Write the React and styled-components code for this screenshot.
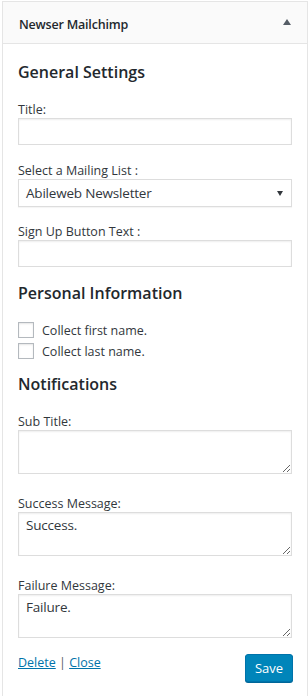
import React from 'react'
import styled, { createGlobalStyle } from 'styled-components'

const GlobalStyle = createGlobalStyle`
  body {
    margin: 0;
    background: #fff;
    font-family: "Open Sans", "Noto Sans", sans-serif;
    color: #23282d;
  }
`

const Widget = styled.div`
  margin: 1px 0 0 2px;
  width: 306px;
  box-sizing: border-box;
  border: 1px solid #e5e5e5;
  border-bottom: none;
  background: #fff;
`

const Header = styled.div`
  display: flex;
  align-items: center;
  justify-content: space-between;
  box-sizing: border-box;
  height: 42px;
  padding: 3px 16px 0 16px;
  background: #fafafa;
  border-bottom: 1px solid #e5e5e5;
  font-size: 12.5px;
  font-weight: 600;
  letter-spacing: -0.2px;
  color: #23282d;
`

const Arrow = styled.span`
  width: 0;
  height: 0;
  border-left: 4px solid transparent;
  border-right: 4px solid transparent;
  border-bottom: 6px solid #555d66;
  margin-top: -4px;
`

const Content = styled.div`
  padding: 17px 14px 14px 15px;
`

const Heading = styled.h3`
  margin: 0 0 ${p => p.gap}px;
  font-size: 16px;
  font-weight: 600;
  line-height: 22px;
  color: #23282d;
`

const Field = styled.div`
  margin-bottom: ${p => p.mb}px;
`

const Label = styled.label`
  display: block;
  font-size: 12.5px;
  line-height: 17px;
  color: #32373c;
`

const TextInput = styled.input`
  display: block;
  box-sizing: border-box;
  width: 274px;
  height: 27px;
  margin: 0;
  border: 1px solid #ddd;
  box-shadow: inset 0 1px 2px rgba(0, 0, 0, 0.07);
  background: #fff;
  font-family: inherit;
  font-size: 13px;
`

const SelectBox = styled.div`
  display: flex;
  align-items: center;
  justify-content: space-between;
  box-sizing: border-box;
  width: 274px;
  height: 28px;
  padding: 0 8px 0 7px;
  border: 1px solid #ddd;
  box-shadow: 0 1px 1px rgba(0, 0, 0, 0.04);
  font-size: 13.5px;
  color: #32373c;
  letter-spacing: -0.2px;
`

const Caret = styled.span`
  width: 0;
  height: 0;
  border-left: 3px solid transparent;
  border-right: 3px solid transparent;
  border-top: 5px solid #32373c;
`

const TextArea = styled.textarea`
  display: block;
  box-sizing: border-box;
  width: 274px;
  height: 44px;
  margin: 0;
  padding: 3px 7px;
  border: 1px solid #ddd;
  box-shadow: inset 0 1px 2px rgba(0, 0, 0, 0.07);
  resize: vertical;
  font-family: inherit;
  font-size: 13.5px;
  line-height: 18px;
  color: #32373c;
  letter-spacing: -0.2px;
`

const CheckRow = styled.label`
  display: flex;
  align-items: center;
  gap: 8px;
  height: 16px;
  margin-bottom: ${p => p.mb}px;
  font-size: 12.5px;
  color: #32373c;
`

const Box = styled.span`
  box-sizing: border-box;
  width: 16px;
  height: 16px;
  border: 1px solid #b4b9be;
  background: #fff;
  box-shadow: inset 0 1px 2px rgba(0, 0, 0, 0.1);
`

const Footer = styled.div`
  display: flex;
  justify-content: space-between;
  align-items: flex-start;
  margin-top: 16px;
`

const Links = styled.div`
  font-size: 12.5px;
  line-height: 18px;
  color: #555d66;
  a {
    color: #0073aa;
    text-decoration: underline;
  }
`

const SaveButton = styled.button`
  box-sizing: border-box;
  width: 48px;
  height: 28px;
  padding: 0 0 1px;
  border: 1px solid #0073aa;
  border-radius: 3px;
  background: #0085ba;
  box-shadow: 0 1px 0 #006799;
  color: #fff;
  font-family: inherit;
  font-size: 13px;
  cursor: pointer;
`

export default function App () {
  return (
    <>
      <GlobalStyle />
      <Widget>
        <Header>
          <span>Newser Mailchimp</span>
          <Arrow />
        </Header>
        <Content>
          <Heading gap={18}>General Settings</Heading>
          <Field mb={17}>
            <Label>Title:</Label>
            <TextInput />
          </Field>
          <Field mb={16}>
            <Label>Select a Mailing List :</Label>
            <SelectBox>
              <span>Abileweb Newsletter</span>
              <Caret />
            </SelectBox>
          </Field>
          <Field mb={15}>
            <Label>Sign Up Button Text :</Label>
            <TextInput />
          </Field>
          <Heading gap={18}>Personal Information</Heading>
          <CheckRow mb={5}>
            <Box />
            Collect first name.
          </CheckRow>
          <CheckRow mb={14}>
            <Box />
            Collect last name.
          </CheckRow>
          <Heading gap={18}>Notifications</Heading>
          <Field mb={21}>
            <Label>Sub Title:</Label>
            <TextArea />
          </Field>
          <Field mb={21}>
            <Label>Success Message:</Label>
            <TextArea defaultValue='Success.' />
          </Field>
          <Field mb={0}>
            <Label>Failure Message:</Label>
            <TextArea defaultValue='Failure.' />
          </Field>
          <Footer>
            <Links>
              <a href='#'>Delete</a> | <a href='#'>Close</a>
            </Links>
            <SaveButton>Save</SaveButton>
          </Footer>
        </Content>
      </Widget>
    </>
  )
}
